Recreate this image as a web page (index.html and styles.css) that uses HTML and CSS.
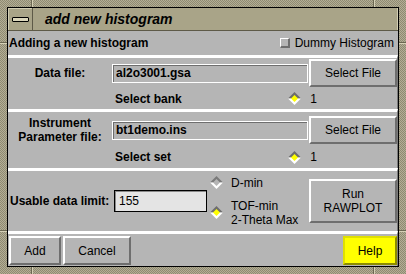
FILE: index.html
```html
<!DOCTYPE html>
<html lang="en">
<head>
<meta charset="UTF-8">
<title>add new histogram</title>
<link rel="stylesheet" href="styles.css">
</head>
<body>
<div class="wm">
  <span class="notch v t1"></span>
  <span class="notch v t2"></span>
  <span class="notch v b1"></span>
  <span class="notch v b2"></span>
  <span class="notch h l1"></span>
  <span class="notch h l2"></span>
  <span class="notch h r1"></span>
  <span class="notch h r2"></span>
  <div class="window">
    <div class="titlebar">
      <div class="menu-btn"><span class="bar"></span></div>
      <div class="title">add new histogram</div>
    </div>
    <div class="client">
      <div class="head">
        <b>Adding a new histogram</b>
        <label class="check"><span class="box"></span>Dummy Histogram</label>
      </div>

      <div class="section file">
        <div class="main">
          <div class="lbl">Data file:</div>
          <div class="entry">al2o3001.gsa</div>
          <button class="btn pick">Select File</button>
        </div>
        <div class="sub">
          <span>Select bank</span>
          <span class="radio">
            <svg class="dia" viewBox="0 0 13 13" width="13" height="13"><path d="M0 6.5L6.5 0L13 6.5Z" fill="#6e6e6e"/><path d="M0 6.5L6.5 13L13 6.5Z" fill="#fff"/><path d="M3 6.5L6.5 3L10 6.5L6.5 10Z" fill="#ff0"/></svg>
            1
          </span>
        </div>
      </div>

      <div class="section inst">
        <div class="main">
          <div class="lbl two">Instrument<br>Parameter file:</div>
          <div class="entry">bt1demo.ins</div>
          <button class="btn pick">Select File</button>
        </div>
        <div class="sub">
          <span>Select set</span>
          <span class="radio">
            <svg class="dia" viewBox="0 0 13 13" width="13" height="13"><path d="M0 6.5L6.5 0L13 6.5Z" fill="#6e6e6e"/><path d="M0 6.5L6.5 13L13 6.5Z" fill="#fff"/><path d="M3 6.5L6.5 3L10 6.5L6.5 10Z" fill="#ff0"/></svg>
            1
          </span>
        </div>
      </div>

      <div class="section limit">
        <div class="lbl3">Usable data limit:</div>
        <div class="entry light">155</div>
        <div class="opts">
          <div class="opt">
            <svg class="dia" viewBox="0 0 13 13" width="13" height="13"><path d="M0 6.5L6.5 0L13 6.5Z" fill="#7a7a7a"/><path d="M0 6.5L6.5 13L13 6.5Z" fill="#fff"/><path d="M3 6.5L6.5 3L10 6.5L6.5 10Z" fill="#b5b5b5"/></svg>
            <span>D-min</span>
          </div>
          <div class="opt">
            <svg class="dia" viewBox="0 0 13 13" width="13" height="13"><path d="M0 6.5L6.5 0L13 6.5Z" fill="#6e6e6e"/><path d="M0 6.5L6.5 13L13 6.5Z" fill="#fff"/><path d="M3 6.5L6.5 3L10 6.5L6.5 10Z" fill="#ff0"/></svg>
            <span>TOF-min<br>2-Theta Max</span>
          </div>
        </div>
        <button class="btn run">Run<br>RAWPLOT</button>
      </div>

      <div class="section actions">
        <button class="btn add">Add</button>
        <button class="btn cancel">Cancel</button>
        <button class="btn help">Help</button>
      </div>
    </div>
  </div>
</div>
</body>
</html>
```

FILE: styles.css
```css
* {box-sizing: border-box;}
body {margin: 0; font-family: "Liberation Sans", Arial, sans-serif; font-size: 12px; color: #000;}

/* window manager frame */
.wm {
  position: relative;
  width: 406px;
  height: 274px;
  padding: 7px;
  background: repeating-conic-gradient(#b3ae95 0 25%, #8f8a72 0 50%) 0 0 / 2px 2px;
}
.notch {position: absolute; background: #d6d1b6; box-shadow: -1px 0 #6b6752;}
.notch.v {width: 1px; height: 7px;}
.notch.h {width: 7px; height: 1px; box-shadow: 0 -1px #6b6752;}
.t1 {left: 32px; top: 0;}
.t2 {left: 374px; top: 0;}
.b1 {left: 32px; bottom: 0;}
.b2 {left: 374px; bottom: 0;}
.l1 {left: 0; top: 43px;}
.l2 {left: 0; top: 231px;}
.r1 {right: 0; top: 43px;}
.r2 {right: 0; top: 231px;}

.window {
  height: 100%;
  border: 1px solid #000;
  display: flex;
  flex-direction: column;
}
.titlebar {
  height: 23px;
  display: flex;
  background: #a9a488;
  border-bottom: 1px solid #5e5a48;
  box-shadow: inset -1px 0 #d2cdb2;
}
.menu-btn {
  width: 25px;
  display: flex;
  align-items: center;
  border-right: 1px solid #5e5a48;
  box-shadow: inset 1px 1px #d2cdb2;
}
.bar {
  width: 17px;
  height: 5px;
  margin-left: 4px;
  border: 1px solid #000;
  border-radius: 1px;
  background: #dcd7bc;
}
.title {
  padding-left: 12px;
  font-size: 14px;
  font-weight: bold;
  font-style: italic;
  line-height: 22px;
}

/* dialog body */
.client {flex: 1; background: #b5b5b5; display: flex; flex-direction: column;}
.head {
  height: 24px;
  display: flex;
  align-items: center;
  justify-content: space-between;
  padding: 0 4px 0 1px;
}
.check {display: flex; align-items: center; gap: 5px;}
.box {
  width: 10px;
  height: 10px;
  border: 1px solid #fff;
  border-right: 2px solid #6e6e6e;
  border-bottom: 2px solid #6e6e6e;
}
.section {border-top: 3px solid #fff; border-right: 1px solid #7a7a7a;}

.main {display: flex; align-items: center;}
.file {height: 54px;}
.file .main {height: 30px;}
.inst {height: 59px; padding-top: 2px;}
.inst .main {height: 32px;}
.lbl {width: 104px; text-align: center; font-weight: bold;}
.lbl.two {line-height: 14px;}
.entry {
  width: 196px;
  height: 19px;
  padding-left: 3px;
  line-height: 17px;
  font-weight: bold;
  border: 1px solid #fff;
  box-shadow: inset 1px 1px #6e6e6e;
}
.btn {
  font: 12px "Liberation Sans", Arial, sans-serif;
  color: #000;
  background: #b5b5b5;
  border: 2px solid;
  border-color: #fff #6e6e6e #6e6e6e #fff;
  padding: 0;
}
.pick {width: 88px; height: 28px; margin-left: 1px;}
.sub {display: flex; align-items: center; height: 21px; padding-left: 107px; font-weight: bold;}
.inst .sub {height: 22px;}
.radio {margin-left: auto; margin-right: 80px; display: flex; align-items: center; gap: 9px; font-weight: normal;}
.dia {display: block; flex: none;}

.limit {height: 63px; display: flex; align-items: center; padding-left: 2px;}
.lbl3 {width: 101px; font-weight: bold; white-space: nowrap;}
.entry.light {
  width: 93px;
  height: 22px;
  margin-left: 3px;
  padding-left: 4px;
  line-height: 20px;
  font-weight: normal;
  background: #e4e4e4;
  border: 1px solid #000;
  box-shadow: inset 1px 1px #8a8a8a;
}
.opts {width: 99px; margin-left: 3px; display: flex; flex-direction: column; gap: 9px;}
.opt {display: flex; align-items: center; gap: 8px; line-height: 14px;}
.run {width: 88px; height: 44px; line-height: 14px;}

.actions {height: 35px; display: flex; align-items: flex-start; padding: 2px 0 0 1px;}
.actions .btn {height: 29px;}
.add {width: 52px;}
.cancel {width: 68px; margin-left: 2px;}
.help {
  width: 54px;
  margin-left: auto;
  background: #ffff00;
  border-color: #e0e000 #8c8c00 #8c8c00 #e0e000;
}
```
